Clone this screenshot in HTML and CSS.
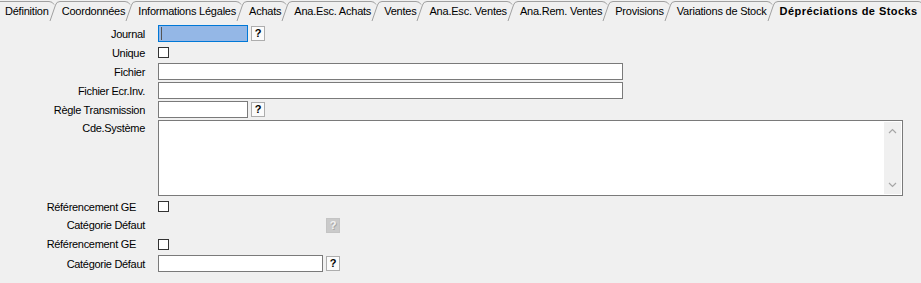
FILE: index.html
```html
<!DOCTYPE html>
<html lang="fr">
<head>
    <meta charset="UTF-8">
    <title>Dépréciations de Stocks</title>
    <link rel="stylesheet" href="styles.css">
</head>
<body>
    <!-- Tab strip -->
    <div class="tabs">
        <span class="tab first">Définition</span>
        <svg class="sep" width="13" height="21" viewBox="0 0 13 21"><path d="M0 1.5 Q3.5 1.5 5 4.5"/><path d="M1 21 L6.5 5 Q7.5 1.5 11 1.5 H13"/></svg>
        <span class="tab">Coordonnées</span>
        <svg class="sep" width="13" height="21" viewBox="0 0 13 21"><path d="M0 1.5 Q3.5 1.5 5 4.5"/><path d="M1 21 L6.5 5 Q7.5 1.5 11 1.5 H13"/></svg>
        <span class="tab">Informations Légales</span>
        <svg class="sep" width="13" height="21" viewBox="0 0 13 21"><path d="M0 1.5 Q3.5 1.5 5 4.5"/><path d="M1 21 L6.5 5 Q7.5 1.5 11 1.5 H13"/></svg>
        <span class="tab">Achats</span>
        <svg class="sep" width="13" height="21" viewBox="0 0 13 21"><path d="M0 1.5 Q3.5 1.5 5 4.5"/><path d="M1 21 L6.5 5 Q7.5 1.5 11 1.5 H13"/></svg>
        <span class="tab">Ana.Esc. Achats</span>
        <svg class="sep" width="13" height="21" viewBox="0 0 13 21"><path d="M0 1.5 Q3.5 1.5 5 4.5"/><path d="M1 21 L6.5 5 Q7.5 1.5 11 1.5 H13"/></svg>
        <span class="tab">Ventes</span>
        <svg class="sep" width="13" height="21" viewBox="0 0 13 21"><path d="M0 1.5 Q3.5 1.5 5 4.5"/><path d="M1 21 L6.5 5 Q7.5 1.5 11 1.5 H13"/></svg>
        <span class="tab">Ana.Esc. Ventes</span>
        <svg class="sep" width="13" height="21" viewBox="0 0 13 21"><path d="M0 1.5 Q3.5 1.5 5 4.5"/><path d="M1 21 L6.5 5 Q7.5 1.5 11 1.5 H13"/></svg>
        <span class="tab">Ana.Rem. Ventes</span>
        <svg class="sep" width="13" height="21" viewBox="0 0 13 21"><path d="M0 1.5 Q3.5 1.5 5 4.5"/><path d="M1 21 L6.5 5 Q7.5 1.5 11 1.5 H13"/></svg>
        <span class="tab">Provisions</span>
        <svg class="sep" width="13" height="21" viewBox="0 0 13 21"><path d="M0 1.5 Q3.5 1.5 5 4.5"/><path d="M1 21 L6.5 5 Q7.5 1.5 11 1.5 H13"/></svg>
        <span class="tab">Variations de Stock</span>
        <svg class="sep" width="13" height="21" viewBox="0 0 13 21"><path d="M0 1.5 Q3.5 1.5 5 4.5"/><path d="M1 21 L6.5 5 Q7.5 1.5 11 1.5 H13"/></svg>
        <span class="tab active">Dépréciations de Stocks</span>
        <svg class="sep-end" width="6" height="21" viewBox="0 0 6 21"><path d="M0 1.5 Q4 1.5 5 6"/></svg>
    </div>

    <!-- Form -->
    <div class="form">
        <div class="row">
            <span class="lbl">Journal</span>
            <div class="field">
                <div class="input focus w-small"><span class="caret"></span></div>
                <span class="help">?</span>
            </div>
        </div>
        <div class="row">
            <span class="lbl">Unique</span>
            <div class="field"><span class="check"></span></div>
        </div>
        <div class="row">
            <span class="lbl">Fichier</span>
            <div class="field"><div class="input w-wide"></div></div>
        </div>
        <div class="row">
            <span class="lbl">Fichier Ecr.Inv.</span>
            <div class="field"><div class="input w-wide"></div></div>
        </div>
        <div class="row">
            <span class="lbl">Règle Transmission</span>
            <div class="field">
                <div class="input w-small"></div>
                <span class="help">?</span>
            </div>
        </div>
        <div class="row row-memo">
            <span class="lbl">Cde.Système</span>
            <div class="memo">
                <div class="memo-text"></div>
                <div class="scrollbar">
                    <svg width="9" height="6" viewBox="0 0 9 6"><path d="M1 5 L4.5 1.5 L8 5"/></svg>
                    <svg width="9" height="6" viewBox="0 0 9 6"><path d="M1 1 L4.5 4.5 L8 1"/></svg>
                </div>
            </div>
        </div>
        <div class="row">
            <span class="lbl lbl-inset">Référencement GE</span>
            <div class="field"><span class="check"></span></div>
        </div>
        <div class="row row-short">
            <span class="lbl">Catégorie Défaut</span>
            <div class="field">
                <span class="spacer w-mid"></span>
                <span class="help disabled">?</span>
            </div>
        </div>
        <div class="row row-tall">
            <span class="lbl lbl-inset">Référencement GE</span>
            <div class="field"><span class="check"></span></div>
        </div>
        <div class="row">
            <span class="lbl">Catégorie Défaut</span>
            <div class="field">
                <div class="input w-mid"></div>
                <span class="help">?</span>
            </div>
        </div>
    </div>
</body>
</html>
```

FILE: styles.css
```css
body {
    margin: 0;
    background-color: #f0f0f0;
    font-family: "Liberation Sans", Arial, sans-serif;
    font-size: 11px;
    letter-spacing: -0.3px;
    color: #000;
}

/* Tabs */
.tabs {
    display: flex;
    height: 21px;
    white-space: nowrap;
}
.tab {
    box-sizing: border-box;
    border-top: 1px solid #a0a0a0;
    margin-top: 1px;
    height: 20px;
    line-height: 19px;
    letter-spacing: -0.22px;
}
.tab.first {
    padding-left: 5px;
}
.tab.active {
    font-weight: bold;
    letter-spacing: 0.45px;
}
.sep, .sep-end {
    flex: none;
}
.sep path, .sep-end path {
    fill: none;
    stroke: #a0a0a0;
    stroke-width: 1;
}

/* Form */
.form {
    display: flex;
    flex-direction: column;
    gap: 2px;
    padding-top: 4px;
}
.row {
    display: grid;
    grid-template-columns: 146px auto;
    column-gap: 12px;
    align-items: center;
    height: 17px;
}
.row-short {
    height: 16px;
}
.row-tall {
    height: 18px;
}
.row-memo {
    height: 76px;
    align-items: start;
}
.row-memo .lbl {
    padding-top: 2px;
}
.lbl {
    text-align: right;
    padding-right: 1px;
    white-space: nowrap;
}
.lbl-inset {
    padding-right: 10px;
}
.field {
    display: flex;
    align-items: center;
    gap: 3px;
}
.input {
    box-sizing: border-box;
    height: 17px;
    border: 1px solid #7a7a7a;
    background-color: #fff;
}
.input.focus {
    border-color: #0078d7;
    background-color: #94b7e6;
    padding: 1px 0 1px 2px;
}
.caret {
    display: block;
    width: 1px;
    height: 13px;
    background-color: #555;
}
.w-small {
    width: 90px;
}
.w-mid {
    width: 165px;
}
.w-wide {
    width: 465px;
}
.spacer {
    display: block;
    height: 1px;
}
.help {
    box-sizing: border-box;
    display: inline-block;
    width: 14px;
    height: 15px;
    border: 1px solid #adadad;
    background-color: #fbfbfb;
    font-weight: bold;
    font-size: 11px;
    letter-spacing: 0;
    line-height: 13px;
    text-align: center;
}
.help.disabled {
    background-color: #cacaca;
    border-color: #c4c4c4;
    color: #f2f2f2;
    text-shadow: 1px 1px 0 #a8a8a8;
}
.check {
    box-sizing: border-box;
    display: block;
    width: 11px;
    height: 11px;
    border: 1px solid #333;
    background-color: #fff;
}

/* Memo with scrollbar */
.memo {
    box-sizing: border-box;
    display: flex;
    width: 745px;
    height: 76px;
    border: 1px solid #7a7a7a;
    background-color: #fff;
    padding: 1px;
}
.memo-text {
    flex: 1;
}
.scrollbar {
    width: 17px;
    background-color: #f0f0f0;
    display: flex;
    flex-direction: column;
    justify-content: space-between;
    align-items: center;
    padding: 6px 0;
}
.scrollbar path {
    fill: none;
    stroke: #a6a6a6;
    stroke-width: 1.2;
}
```
